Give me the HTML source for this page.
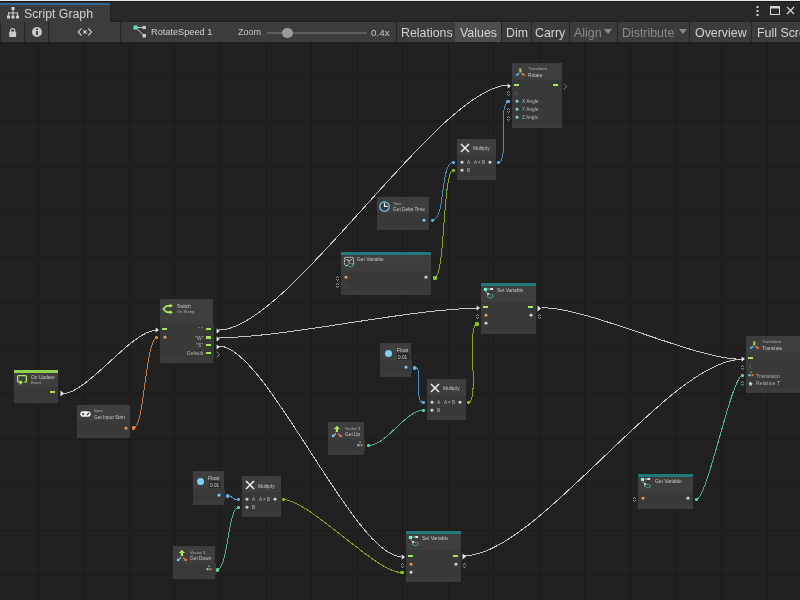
<!DOCTYPE html><html><head><meta charset="utf-8"><style>
html,body{margin:0;padding:0;width:800px;height:600px;overflow:hidden;background:#212121;font-family:"Liberation Sans", sans-serif;}
#root{position:relative;width:800px;height:600px;overflow:hidden;}
.t{will-change:transform;}
</style></head><body><div id="root">
<svg style="position:absolute;left:0;top:0" width="800" height="600"><rect x="38" y="42" width="1" height="558" fill="#1b1b1b"/><rect x="83" y="42" width="1" height="558" fill="#1b1b1b"/><rect x="129" y="42" width="1" height="558" fill="#1b1b1b"/><rect x="174" y="42" width="1" height="558" fill="#1b1b1b"/><rect x="220" y="42" width="1" height="558" fill="#1b1b1b"/><rect x="266" y="42" width="1" height="558" fill="#1b1b1b"/><rect x="311" y="42" width="1" height="558" fill="#1b1b1b"/><rect x="357" y="42" width="1" height="558" fill="#1b1b1b"/><rect x="402" y="42" width="1" height="558" fill="#1b1b1b"/><rect x="448" y="42" width="1" height="558" fill="#1b1b1b"/><rect x="493" y="42" width="1" height="558" fill="#1b1b1b"/><rect x="539" y="42" width="1" height="558" fill="#1b1b1b"/><rect x="584" y="42" width="1" height="558" fill="#1b1b1b"/><rect x="630" y="42" width="1" height="558" fill="#1b1b1b"/><rect x="675" y="42" width="1" height="558" fill="#1b1b1b"/><rect x="721" y="42" width="1" height="558" fill="#1b1b1b"/><rect x="767" y="42" width="1" height="558" fill="#1b1b1b"/><rect x="0" y="75" width="800" height="1" fill="#1b1b1b"/><rect x="0" y="120" width="800" height="1" fill="#1b1b1b"/><rect x="0" y="166" width="800" height="1" fill="#1b1b1b"/><rect x="0" y="211" width="800" height="1" fill="#1b1b1b"/><rect x="0" y="257" width="800" height="1" fill="#1b1b1b"/><rect x="0" y="302" width="800" height="1" fill="#1b1b1b"/><rect x="0" y="348" width="800" height="1" fill="#1b1b1b"/><rect x="0" y="393" width="800" height="1" fill="#1b1b1b"/><rect x="0" y="439" width="800" height="1" fill="#1b1b1b"/><rect x="0" y="484" width="800" height="1" fill="#1b1b1b"/><rect x="0" y="530" width="800" height="1" fill="#1b1b1b"/><rect x="0" y="575" width="800" height="1" fill="#1b1b1b"/></svg>
<div style="position:absolute;left:0px;top:0px;width:800px;height:22px;background:#282828;"></div>
<div style="position:absolute;left:0px;top:0px;width:800px;height:1px;background:#e6e6e6;"></div>
<div style="position:absolute;left:0px;top:1px;width:800px;height:1px;background:#1a1a1a;"></div>
<div style="position:absolute;left:0px;top:21px;width:800px;height:1px;background:#1f1f1f;"></div>
<div style="position:absolute;left:110px;top:5px;width:1px;height:17px;background:#1f1f1f;"></div>
<div style="position:absolute;left:0px;top:3px;width:110px;height:2px;background:#2f6499;"></div>
<div style="position:absolute;left:0px;top:5px;width:110px;height:17px;background:#3c3c3c;"></div>
<svg style="position:absolute;left:6px;top:6px" width="14" height="14"><g fill="#d0d0d0"><rect x="5.5" y="1" width="3" height="3"/><rect x="6.5" y="4" width="1" height="3"/><rect x="2" y="6.5" width="10" height="1"/><rect x="2" y="6.5" width="1" height="3"/><rect x="11" y="6.5" width="1" height="3"/><rect x="6.5" y="6.5" width="1" height="3"/><rect x="1" y="9.5" width="3" height="3"/><rect x="5.5" y="9.5" width="3" height="3"/><rect x="10" y="9.5" width="3" height="3"/></g></svg>
<div class="t" style="position:absolute;left:23.5px;top:7.9px;font-size:12.3px;line-height:1;color:#d2d2d2;white-space:nowrap;">Script Graph</div>
<svg style="position:absolute;left:750px;top:4px" width="50" height="14"><g fill="#d8d8d8"><rect x="6.5" y="2" width="2" height="2"/><rect x="6.5" y="6" width="2" height="2"/><rect x="6.5" y="10" width="2" height="2"/></g><rect x="20.5" y="2.5" width="9" height="8" stroke="#d8d8d8" stroke-width="1" fill="none"/><rect x="20.5" y="2.5" width="9" height="2" fill="#d8d8d8"/><path d="M37 3 L44 10 M44 3 L37 10" stroke="#d8d8d8" stroke-width="1.2"/></svg>
<div style="position:absolute;left:0px;top:22px;width:800px;height:20px;background:#3c3c3c;"></div>
<div style="position:absolute;left:0px;top:22px;width:1px;height:20px;background:#262626;"></div>
<div style="position:absolute;left:24px;top:22px;width:1px;height:20px;background:#262626;"></div>
<div style="position:absolute;left:48px;top:22px;width:1px;height:20px;background:#262626;"></div>
<div style="position:absolute;left:120px;top:22px;width:1px;height:20px;background:#262626;"></div>
<div style="position:absolute;left:396px;top:22px;width:1px;height:20px;background:#262626;"></div>
<div style="position:absolute;left:455px;top:22px;width:1px;height:20px;background:#262626;"></div>
<div style="position:absolute;left:501px;top:22px;width:1px;height:20px;background:#262626;"></div>
<div style="position:absolute;left:531px;top:22px;width:1px;height:20px;background:#262626;"></div>
<div style="position:absolute;left:569px;top:22px;width:1px;height:20px;background:#262626;"></div>
<div style="position:absolute;left:617px;top:22px;width:1px;height:20px;background:#262626;"></div>
<div style="position:absolute;left:689px;top:22px;width:1px;height:20px;background:#262626;"></div>
<div style="position:absolute;left:751px;top:22px;width:1px;height:20px;background:#262626;"></div>
<div style="position:absolute;left:455px;top:22px;width:46px;height:20px;background:#4e4e4e;"></div>
<div style="position:absolute;left:456px;top:22px;width:45px;height:20px;background:#4d4d4d;"></div>
<svg style="position:absolute;left:8px;top:27px" width="10" height="11"><path d="M2.6 4.8 V3.6 A2 2 0 0 1 6.6 3.6 V4.8" stroke="#c8c8c8" stroke-width="1.3" fill="none"/><rect x="1.2" y="4.6" width="6.9" height="5.4" rx="0.6" fill="#c8c8c8"/></svg>
<svg style="position:absolute;left:31px;top:26px" width="12" height="12"><circle cx="6" cy="6" r="5" fill="#c8c8c8"/><rect x="5.1" y="5" width="1.8" height="4" fill="#3c3c3c"/><rect x="5.1" y="2.4" width="1.8" height="1.6" fill="#3c3c3c"/></svg>
<svg style="position:absolute;left:77px;top:27px" width="16" height="10"><path d="M4.6 1.4 L1.2 5 L4.6 8.6 M11.2 1.4 L14.6 5 L11.2 8.6 M6.4 3.4 L9.6 6.6 M9.6 3.4 L6.4 6.6" stroke="#d4d4d4" stroke-width="1.1" fill="none"/></svg>
<svg style="position:absolute;left:133px;top:25px" width="14" height="13"><path d="M2.5 2.5 L11 2.5 M2.5 2.5 L11 10.5" stroke="#c8c8c8" stroke-width="1"/><rect x="0.5" y="0.5" width="4" height="4" fill="#5fe3c8"/><rect x="9.5" y="1" width="3.5" height="3" fill="#c8c8c8"/><rect x="9.5" y="9" width="3.5" height="3.5" fill="#c8c8c8"/></svg>
<div class="t" style="position:absolute;left:151px;top:28.099999999999998px;font-size:9.2px;line-height:1;color:#d2d2d2;white-space:nowrap;">RotateSpeed 1</div>
<div class="t" style="position:absolute;left:238px;top:28.099999999999998px;font-size:9.0px;line-height:1;color:#c8c8c8;white-space:nowrap;">Zoom</div>
<div style="position:absolute;left:267px;top:32px;width:100px;height:2px;background:#5e5e5e;"></div>
<div style="position:absolute;left:282px;top:27.5px;width:10.5px;height:10.5px;border-radius:50%;background:#9a9a9a"></div>
<div class="t" style="position:absolute;left:370.5px;top:28.099999999999998px;font-size:9.9px;line-height:1;color:#c8c8c8;white-space:nowrap;">0.4x</div>
<div class="t" style="position:absolute;left:400.5px;top:26.5px;font-size:12.4px;line-height:1;color:#d2d2d2;white-space:nowrap;">Relations</div>
<div class="t" style="position:absolute;left:459.5px;top:26.5px;font-size:12.4px;line-height:1;color:#d2d2d2;white-space:nowrap;">Values</div>
<div class="t" style="position:absolute;left:505.5px;top:26.5px;font-size:12.4px;line-height:1;color:#d2d2d2;white-space:nowrap;">Dim</div>
<div class="t" style="position:absolute;left:535px;top:26.5px;font-size:12.4px;line-height:1;color:#d2d2d2;white-space:nowrap;">Carry</div>
<div class="t" style="position:absolute;left:574px;top:26.5px;font-size:12.4px;line-height:1;color:#8a8a8a;white-space:nowrap;">Align</div>
<div class="t" style="position:absolute;left:621.5px;top:26.5px;font-size:12.4px;line-height:1;color:#8a8a8a;white-space:nowrap;">Distribute</div>
<div class="t" style="position:absolute;left:695px;top:26.5px;font-size:12.4px;line-height:1;color:#d2d2d2;white-space:nowrap;">Overview</div>
<div class="t" style="position:absolute;left:756.5px;top:26.5px;font-size:12.4px;line-height:1;color:#d2d2d2;white-space:nowrap;">Full Screen</div>
<svg style="position:absolute;left:604px;top:29px" width="9" height="6"><path d="M0 0 L8 0 L4 5Z" fill="#8a8a8a"/></svg>
<svg style="position:absolute;left:679px;top:29px" width="9" height="6"><path d="M0 0 L8 0 L4 5Z" fill="#8a8a8a"/></svg>
<svg style="position:absolute;left:0;top:0" width="800" height="600"><path d="M219 330 C289 330 439 85 509 85" stroke="#c4c4c4" stroke-width="1.0" fill="none" shape-rendering="crispEdges"/><path d="M63 393.6 C87.5 393.6 131.5 330.4 156 330.4" stroke="#c4c4c4" stroke-width="1.0" fill="none" shape-rendering="crispEdges"/><path d="M133.4 428.4 C144.4 428.4 145.6 338.4 156.6 338.4" stroke="#c47c40" stroke-width="1.0" fill="none" shape-rendering="crispEdges"/><path d="M218.75 337.7 C286.25 337.7 410.0 308.4 477.5 308.4" stroke="#c4c4c4" stroke-width="1.0" fill="none" shape-rendering="crispEdges"/><path d="M219 346 C266 346 354 556.5 401 556.5" stroke="#c4c4c4" stroke-width="1.0" fill="none" shape-rendering="crispEdges"/><path d="M542.4 307.8 C590.9 307.8 693.5 359.3 742 359.3" stroke="#c4c4c4" stroke-width="1.0" fill="none" shape-rendering="crispEdges"/><path d="M464.3 555.7 C537.8 555.7 668.5 359.3 742 359.3" stroke="#c4c4c4" stroke-width="1.0" fill="none" shape-rendering="crispEdges"/><path d="M432.6 220 C445.6 220 440.2 162.2 453.2 162.2" stroke="#5189b9" stroke-width="1.0" fill="none" shape-rendering="crispEdges"/><path d="M434.75 277.4 C445.25 277.4 442.7 170.2 453.2 170.2" stroke="#7fa61b" stroke-width="1.0" fill="none" shape-rendering="crispEdges"/><path d="M498.4 162.5 C509.4 162.5 497.4 102.25 508.4 102.25" stroke="#5189b9" stroke-width="1.0" fill="none" shape-rendering="crispEdges"/><path d="M414.45 367.2 C424.45 367.2 413.3 402.45 423.3 402.45" stroke="#5189b9" stroke-width="1.0" fill="none" shape-rendering="crispEdges"/><path d="M368.55 445.5 C386.05 445.5 405.8 410.25 423.3 410.25" stroke="#4fb48d" stroke-width="1.0" fill="none" shape-rendering="crispEdges"/><path d="M468.3 402.45 C479.8 402.45 465.8 323.8 477.3 323.8" stroke="#7fa61b" stroke-width="1.0" fill="none" shape-rendering="crispEdges"/><path d="M226.3 495.6 C235.3 495.6 229.5 499.6 238.5 499.6" stroke="#5189b9" stroke-width="1.0" fill="none" shape-rendering="crispEdges"/><path d="M217.4 569.4 C227.9 569.4 228.0 507.5 238.5 507.5" stroke="#4fb48d" stroke-width="1.0" fill="none" shape-rendering="crispEdges"/><path d="M283.5 499.5 C308.5 499.5 376 572.5 401 572.5" stroke="#7fa61b" stroke-width="1.0" fill="none" shape-rendering="crispEdges"/><path d="M696.5 499.2 C707.5 499.2 731.5 375.5 742.5 375.5" stroke="#4fb48d" stroke-width="1.0" fill="none" shape-rendering="crispEdges"/></svg>
<div style="position:absolute;left:512px;top:63px;width:50px;height:17px;background:#3e3e3e;"></div>
<div style="position:absolute;left:512px;top:80px;width:50px;height:44px;background:#393939;"></div>
<div style="position:absolute;left:512px;top:124px;width:50px;height:4px;background:#3c3c3c;"></div>
<svg style="position:absolute;left:514.5px;top:67.5px" width="11" height="10" viewBox="0 0 11 10"><rect x="4.3" y="0.3" width="2" height="4.2" fill="#9bd64a"/><path d="M4.2 5.6 L1 7.6" stroke="#5cb3e6" stroke-width="1.8"/><path d="M6.6 5.6 L9.8 7.6" stroke="#e87a3a" stroke-width="1.8"/></svg>
<div class="t" style="position:absolute;left:528px;top:66.8px;font-size:4.2px;line-height:1;color:#b0b0b0;white-space:nowrap;">Transform</div>
<div class="t" style="position:absolute;left:528px;top:74.2px;font-size:4.9px;line-height:1;color:#c8c8c8;white-space:nowrap;">Rotate</div>
<div style="position:absolute;left:514.0px;top:83.75px;width:5px;height:2.5px;background:#a4e55a;"></div>
<div style="position:absolute;left:553.0px;top:83.75px;width:5px;height:2.5px;background:#a4e55a;"></div>
<svg style="position:absolute;left:513px;top:90px" width="6" height="6" viewBox="0 0 6 6"><path d="M3 0.5 V3 L0.8 5.2 M3 3 L5.2 5.2" stroke="#4f5f45" stroke-width="0.9" fill="none"/></svg>
<svg style="position:absolute;left:514.5px;top:99.0px" width="4" height="4"><path d="M2 0.5 L3.6 1.7 L3.2 3.5 L0.8 3.5 L0.4 1.7Z" fill="#7fcff5"/></svg>
<div class="t" style="position:absolute;left:522px;top:99.89999999999999px;font-size:4.8px;line-height:1;color:#b8b8b8;white-space:nowrap;">X Angle</div>
<svg style="position:absolute;left:514.5px;top:107.0px" width="4" height="4"><path d="M2 0.5 L3.6 1.7 L3.2 3.5 L0.8 3.5 L0.4 1.7Z" fill="#7fcff5"/></svg>
<div class="t" style="position:absolute;left:522px;top:107.89999999999999px;font-size:4.8px;line-height:1;color:#b8b8b8;white-space:nowrap;">Y Angle</div>
<svg style="position:absolute;left:514.5px;top:115.0px" width="4" height="4"><path d="M2 0.5 L3.6 1.7 L3.2 3.5 L0.8 3.5 L0.4 1.7Z" fill="#7fcff5"/></svg>
<div class="t" style="position:absolute;left:522px;top:115.89999999999999px;font-size:4.8px;line-height:1;color:#b8b8b8;white-space:nowrap;">Z Angle</div>
<svg style="position:absolute;left:506.5px;top:82.5px" width="5" height="6"><path d="M0.7 0.6 L4 3 L0.7 5.4Z" fill="#e8e8e8"/></svg>
<svg style="position:absolute;left:562.5px;top:82.5px" width="5" height="7"><path d="M0.7 0.7 L3.7 3.5 L0.7 6.3" stroke="#aaa" stroke-width="0.7" fill="none"/></svg>
<svg style="position:absolute;left:505.5px;top:91px" width="5" height="6"><g fill="#8c8c8c"><rect x="2" y="0" width="1" height="1"/><rect x="1" y="1" width="1" height="1"/><rect x="3" y="1" width="1" height="1"/><rect x="1" y="3" width="1" height="1"/><rect x="3" y="3" width="1" height="1"/><rect x="2" y="4" width="1" height="1"/></g></svg>
<div style="position:absolute;left:506.25px;top:99.9px;width:3.5px;height:3.5px;background:#62aee6;border-radius:1.2px"></div>
<svg style="position:absolute;left:505.5px;top:107.5px" width="5" height="6"><g fill="#8c8c8c"><rect x="2" y="0" width="1" height="1"/><rect x="1" y="1" width="1" height="1"/><rect x="3" y="1" width="1" height="1"/><rect x="1" y="3" width="1" height="1"/><rect x="3" y="3" width="1" height="1"/><rect x="2" y="4" width="1" height="1"/></g></svg>
<svg style="position:absolute;left:505.5px;top:115.5px" width="5" height="6"><g fill="#8c8c8c"><rect x="2" y="0" width="1" height="1"/><rect x="1" y="1" width="1" height="1"/><rect x="3" y="1" width="1" height="1"/><rect x="1" y="3" width="1" height="1"/><rect x="3" y="3" width="1" height="1"/><rect x="2" y="4" width="1" height="1"/></g></svg>
<div style="position:absolute;left:457px;top:139px;width:39px;height:16px;background:#3e3e3e;"></div>
<div style="position:absolute;left:457px;top:155px;width:39px;height:21px;background:#393939;"></div>
<div style="position:absolute;left:457px;top:176px;width:39px;height:4px;background:#3c3c3c;"></div>
<svg style="position:absolute;left:459.5px;top:142.5px" width="10" height="10" viewBox="0 0 10 10"><path d="M1 1 L9 9 M9 1 L1 9" stroke="#f0f0f0" stroke-width="1.5"/></svg>
<div class="t" style="position:absolute;left:473px;top:147.4px;font-size:4.9px;line-height:1;color:#c8c8c8;white-space:nowrap;">Multiply</div>
<svg style="position:absolute;left:459.5px;top:160.0px" width="4" height="4"><path d="M2 0.5 L3.6 1.7 L3.2 3.5 L0.8 3.5 L0.4 1.7Z" fill="#d9d9d9"/></svg>
<div class="t" style="position:absolute;left:467px;top:160.70000000000002px;font-size:4.8px;line-height:1;color:#b8b8b8;white-space:nowrap;">A</div>
<div class="t" style="position:absolute;left:474px;top:160.70000000000002px;font-size:4.6px;line-height:1;color:#b8b8b8;white-space:nowrap;">A &#215; B</div>
<svg style="position:absolute;left:487.5px;top:160.0px" width="4" height="4"><path d="M2 0.5 L3.6 1.7 L3.2 3.5 L0.8 3.5 L0.4 1.7Z" fill="#d9d9d9"/></svg>
<svg style="position:absolute;left:459.5px;top:167.89999999999998px" width="4" height="4"><path d="M2 0.5 L3.6 1.7 L3.2 3.5 L0.8 3.5 L0.4 1.7Z" fill="#d9d9d9"/></svg>
<div class="t" style="position:absolute;left:467px;top:168.6px;font-size:4.8px;line-height:1;color:#b8b8b8;white-space:nowrap;">B</div>
<div style="position:absolute;left:451.75px;top:160.70000000000002px;width:3.5px;height:3.5px;background:#62aee6;border-radius:1.2px"></div>
<div style="position:absolute;left:451.75px;top:168.6px;width:3.5px;height:3.5px;background:#8cc41e;border-radius:1.2px"></div>
<div style="position:absolute;left:496.75px;top:160.70000000000002px;width:3.5px;height:3.5px;background:#62aee6;border-radius:1.2px"></div>
<div style="position:absolute;left:377px;top:197px;width:52px;height:16px;background:#3e3e3e;"></div>
<div style="position:absolute;left:377px;top:213px;width:52px;height:13px;background:#393939;"></div>
<div style="position:absolute;left:377px;top:226px;width:52px;height:4px;background:#3c3c3c;"></div>
<svg style="position:absolute;left:377px;top:198px" width="16" height="16" viewBox="0 0 16 16"><circle cx="7.5" cy="8.5" r="4.7" stroke="#7ad4fb" stroke-width="1.15" fill="#393939"/><path d="M7.5 5.1 V8.4 H10.7" stroke="#f4f4f4" stroke-width="1.1" fill="none"/></svg>
<div class="t" style="position:absolute;left:393px;top:203.3px;font-size:3.8px;line-height:1;color:#b0b0b0;white-space:nowrap;">Time</div>
<div class="t" style="position:absolute;left:393px;top:208.20000000000002px;font-size:4.8px;line-height:1;color:#c8c8c8;white-space:nowrap;">Get Delta Time</div>
<svg style="position:absolute;left:421.5px;top:217.5px" width="4" height="4"><path d="M2 0.5 L3.6 1.7 L3.2 3.5 L0.8 3.5 L0.4 1.7Z" fill="#7fcff5"/></svg>
<div style="position:absolute;left:430.75px;top:218.9px;width:3.5px;height:3.5px;background:#62aee6;border-radius:1.2px"></div>
<div style="position:absolute;left:341px;top:252px;width:90px;height:19px;background:#3e3e3e;"></div>
<div style="position:absolute;left:341px;top:252px;width:90px;height:3px;background:#21797c;"></div>
<div style="position:absolute;left:341px;top:271px;width:90px;height:20px;background:#393939;"></div>
<div style="position:absolute;left:341px;top:291px;width:90px;height:4px;background:#3c3c3c;"></div>
<svg style="position:absolute;left:340px;top:254px" width="16" height="16" viewBox="0 0 16 16"><path d="M4.4 4.8 Q4.4 3.3 6 3.3 L12 3.3 Q13.6 3.3 13.6 4.8 L13.6 10 Q13.6 11.6 12 11.6 L6 11.6 Q4.4 11.6 4.4 10Z" stroke="#cfcfcf" stroke-width="1" stroke-dasharray="2.2 0.6" fill="none"/><path d="M5.6 5.2 L9 6.8 L12.4 5.2 M9 6.8 L9 9.2" stroke="#c8c8c8" stroke-width="0.9" fill="none"/><path d="M7.4 11 L9.5 9.3 L11.7 9.3 L13.8 11 L11.7 12.7 L9.5 12.7Z" fill="#3e3e3e" stroke="#5ce8d0" stroke-width="0.9" stroke-dasharray="1.1 0.7"/></svg>
<div class="t" style="position:absolute;left:357px;top:258.40000000000003px;font-size:4.9px;line-height:1;color:#c8c8c8;white-space:nowrap;">Get Variable</div>
<svg style="position:absolute;left:343.5px;top:275.3px" width="4" height="4"><path d="M2 0.5 L3.6 1.7 L3.2 3.5 L0.8 3.5 L0.4 1.7Z" fill="#f0a262"/></svg>
<svg style="position:absolute;left:423.5px;top:275.3px" width="4" height="4"><path d="M2 0.5 L3.6 1.7 L3.2 3.5 L0.8 3.5 L0.4 1.7Z" fill="#d9d9d9"/></svg>
<div style="position:absolute;left:433.25px;top:276.0px;width:3.5px;height:3.5px;background:#8cc41e;border-radius:1.2px"></div>
<svg style="position:absolute;left:343.5px;top:282.5px" width="5" height="5" viewBox="0 0 5 5"><path d="M0.8 1 L2.5 2.5 L4.2 1 M2.5 2.5 V4.5" stroke="#555" stroke-width="0.6" fill="none"/></svg>
<svg style="position:absolute;left:335.0px;top:275.6px" width="5" height="6"><g fill="#8c8c8c"><rect x="2" y="0" width="1" height="1"/><rect x="1" y="1" width="1" height="1"/><rect x="3" y="1" width="1" height="1"/><rect x="1" y="3" width="1" height="1"/><rect x="3" y="3" width="1" height="1"/><rect x="2" y="4" width="1" height="1"/></g></svg>
<svg style="position:absolute;left:335.0px;top:283.3px" width="5" height="6"><g fill="#8c8c8c"><rect x="2" y="0" width="1" height="1"/><rect x="1" y="1" width="1" height="1"/><rect x="3" y="1" width="1" height="1"/><rect x="1" y="3" width="1" height="1"/><rect x="3" y="3" width="1" height="1"/><rect x="2" y="4" width="1" height="1"/></g></svg>
<div style="position:absolute;left:481px;top:283px;width:55px;height:19px;background:#3e3e3e;"></div>
<div style="position:absolute;left:481px;top:283px;width:55px;height:3px;background:#21797c;"></div>
<div style="position:absolute;left:481px;top:302px;width:55px;height:28px;background:#393939;"></div>
<div style="position:absolute;left:481px;top:330px;width:55px;height:4px;background:#3c3c3c;"></div>
<svg style="position:absolute;left:482px;top:286px" width="14" height="14" viewBox="0 0 14 14"><rect x="1.9" y="1.9" width="3.1" height="3" fill="#6ef5e4"/><rect x="5.1" y="2.5" width="3.2" height="1.2" fill="#9a9a9a"/><rect x="8.2" y="2" width="2.9" height="2" fill="#e8e8e8"/><rect x="3.6" y="5.4" width="1.2" height="1.2" fill="#bdbdbd"/><rect x="5" y="7" width="2" height="1.8" fill="#e0e0e0"/><path d="M5.3 10 L7.4 8.3 L9.8 8.3 L11.9 10 L9.8 11.7 L7.4 11.7Z" stroke="#5ce8d0" stroke-width="0.9" stroke-dasharray="1.1 0.7" fill="none"/></svg>
<div class="t" style="position:absolute;left:497px;top:289.1px;font-size:4.9px;line-height:1;color:#c8c8c8;white-space:nowrap;">Set Variable</div>
<div style="position:absolute;left:483.0px;top:305.75px;width:5px;height:2.5px;background:#a4e55a;"></div>
<div style="position:absolute;left:528.0px;top:305.75px;width:5px;height:2.5px;background:#a4e55a;"></div>
<svg style="position:absolute;left:483.5px;top:313.4px" width="4" height="4"><path d="M2 0.5 L3.6 1.7 L3.2 3.5 L0.8 3.5 L0.4 1.7Z" fill="#f0a262"/></svg>
<svg style="position:absolute;left:528.5px;top:313.4px" width="4" height="4"><path d="M2 0.5 L3.6 1.7 L3.2 3.5 L0.8 3.5 L0.4 1.7Z" fill="#d9d9d9"/></svg>
<svg style="position:absolute;left:483.5px;top:321.4px" width="4" height="4"><path d="M2 0.5 L3.6 1.7 L3.2 3.5 L0.8 3.5 L0.4 1.7Z" fill="#d9d9d9"/></svg>
<svg style="position:absolute;left:476px;top:305px" width="5" height="6"><path d="M0.7 0.6 L4 3 L0.7 5.4Z" fill="#e8e8e8"/></svg>
<svg style="position:absolute;left:474.5px;top:313.7px" width="5" height="6"><g fill="#8c8c8c"><rect x="2" y="0" width="1" height="1"/><rect x="1" y="1" width="1" height="1"/><rect x="3" y="1" width="1" height="1"/><rect x="1" y="3" width="1" height="1"/><rect x="3" y="3" width="1" height="1"/><rect x="2" y="4" width="1" height="1"/></g></svg>
<svg style="position:absolute;left:536.5px;top:313.7px" width="5" height="6"><g fill="#8c8c8c"><rect x="2" y="0" width="1" height="1"/><rect x="1" y="1" width="1" height="1"/><rect x="3" y="1" width="1" height="1"/><rect x="1" y="3" width="1" height="1"/><rect x="3" y="3" width="1" height="1"/><rect x="2" y="4" width="1" height="1"/></g></svg>
<div style="position:absolute;left:475.25px;top:322.09999999999997px;width:3.5px;height:3.5px;background:#8cc41e;border-radius:1.2px"></div>
<svg style="position:absolute;left:537px;top:304.5px" width="5" height="7" viewBox="0 0 5 7"><path d="M0.5 0.5 L4 3.5 L0.5 6.5Z" fill="#e8e8e8"/></svg>
<div style="position:absolute;left:406px;top:531px;width:55px;height:19px;background:#3e3e3e;"></div>
<div style="position:absolute;left:406px;top:531px;width:55px;height:3px;background:#21797c;"></div>
<div style="position:absolute;left:406px;top:550px;width:55px;height:28px;background:#393939;"></div>
<div style="position:absolute;left:406px;top:578px;width:55px;height:4px;background:#3c3c3c;"></div>
<svg style="position:absolute;left:407px;top:534px" width="14" height="14" viewBox="0 0 14 14"><rect x="1.9" y="1.9" width="3.1" height="3" fill="#6ef5e4"/><rect x="5.1" y="2.5" width="3.2" height="1.2" fill="#9a9a9a"/><rect x="8.2" y="2" width="2.9" height="2" fill="#e8e8e8"/><rect x="3.6" y="5.4" width="1.2" height="1.2" fill="#bdbdbd"/><rect x="5" y="7" width="2" height="1.8" fill="#e0e0e0"/><path d="M5.3 10 L7.4 8.3 L9.8 8.3 L11.9 10 L9.8 11.7 L7.4 11.7Z" stroke="#5ce8d0" stroke-width="0.9" stroke-dasharray="1.1 0.7" fill="none"/></svg>
<div class="t" style="position:absolute;left:422px;top:537.0999999999999px;font-size:4.9px;line-height:1;color:#c8c8c8;white-space:nowrap;">Set Variable</div>
<div style="position:absolute;left:408.0px;top:554.55px;width:5px;height:2.5px;background:#a4e55a;"></div>
<div style="position:absolute;left:453.0px;top:554.55px;width:5px;height:2.5px;background:#a4e55a;"></div>
<svg style="position:absolute;left:408.5px;top:562.2px" width="4" height="4"><path d="M2 0.5 L3.6 1.7 L3.2 3.5 L0.8 3.5 L0.4 1.7Z" fill="#f0a262"/></svg>
<svg style="position:absolute;left:453.5px;top:562.2px" width="4" height="4"><path d="M2 0.5 L3.6 1.7 L3.2 3.5 L0.8 3.5 L0.4 1.7Z" fill="#d9d9d9"/></svg>
<svg style="position:absolute;left:408.5px;top:570.2px" width="4" height="4"><path d="M2 0.5 L3.6 1.7 L3.2 3.5 L0.8 3.5 L0.4 1.7Z" fill="#d9d9d9"/></svg>
<svg style="position:absolute;left:401px;top:553.8px" width="5" height="6"><path d="M0.7 0.6 L4 3 L0.7 5.4Z" fill="#e8e8e8"/></svg>
<svg style="position:absolute;left:399.5px;top:562.5px" width="5" height="6"><g fill="#8c8c8c"><rect x="2" y="0" width="1" height="1"/><rect x="1" y="1" width="1" height="1"/><rect x="3" y="1" width="1" height="1"/><rect x="1" y="3" width="1" height="1"/><rect x="3" y="3" width="1" height="1"/><rect x="2" y="4" width="1" height="1"/></g></svg>
<svg style="position:absolute;left:461.5px;top:562.5px" width="5" height="6"><g fill="#8c8c8c"><rect x="2" y="0" width="1" height="1"/><rect x="1" y="1" width="1" height="1"/><rect x="3" y="1" width="1" height="1"/><rect x="1" y="3" width="1" height="1"/><rect x="3" y="3" width="1" height="1"/><rect x="2" y="4" width="1" height="1"/></g></svg>
<div style="position:absolute;left:400.25px;top:570.9px;width:3.5px;height:3.5px;background:#8cc41e;border-radius:1.2px"></div>
<svg style="position:absolute;left:462px;top:553.3px" width="5" height="7" viewBox="0 0 5 7"><path d="M0.5 0.5 L4 3.5 L0.5 6.5Z" fill="#e8e8e8"/></svg>
<div style="position:absolute;left:160px;top:299px;width:53px;height:25px;background:#3e3e3e;"></div>
<div style="position:absolute;left:160px;top:324px;width:54px;height:34px;background:#393939;"></div>
<div style="position:absolute;left:160px;top:358px;width:53px;height:5px;background:#3c3c3c;"></div>
<svg style="position:absolute;left:162px;top:303px" width="12" height="12" viewBox="0 0 12 12"><path d="M8.5 2.8 L5.2 2.8 Q4.6 2.8 4.1 3.3 L1.3 6 L4.1 8.7 Q4.6 9.2 5.2 9.2 L8.5 9.2" stroke="#a8f05a" stroke-width="1.7" stroke-linejoin="round" fill="none"/><path d="M7.6 0.8 L11 2.8 L7.6 4.8Z M7.6 7.2 L11 9.2 L7.6 11.2Z" fill="#a8f05a"/></svg>
<div class="t" style="position:absolute;left:177px;top:305.3px;font-size:4.7px;line-height:1;color:#c8c8c8;white-space:nowrap;">Switch</div>
<div class="t" style="position:absolute;left:177px;top:310.2px;font-size:4.1px;line-height:1;color:#b0b0b0;white-space:nowrap;">On String</div>
<div style="position:absolute;left:162.0px;top:327.75px;width:5px;height:2.5px;background:#a4e55a;"></div>
<svg style="position:absolute;left:162.5px;top:335.0px" width="4" height="4"><path d="M2 0.5 L3.6 1.7 L3.2 3.5 L0.8 3.5 L0.4 1.7Z" fill="#f0a262"/></svg>
<div style="position:absolute;left:206.0px;top:327.75px;width:5px;height:2.5px;background:#a4e55a;"></div>
<div class="t" style="position:absolute;right:596.4px;top:328.40000000000003px;font-size:4.9px;line-height:1;color:#b8b8b8;white-space:nowrap;letter-spacing:0.15px">&quot; &quot;</div>
<div style="position:absolute;left:206.0px;top:336.05px;width:5px;height:2.5px;background:#a4e55a;"></div>
<div class="t" style="position:absolute;right:596.4px;top:336.70000000000005px;font-size:4.9px;line-height:1;color:#b8b8b8;white-space:nowrap;letter-spacing:0.15px">&quot;W&quot;</div>
<div style="position:absolute;left:206.0px;top:343.75px;width:5px;height:2.5px;background:#a4e55a;"></div>
<div class="t" style="position:absolute;right:596.4px;top:344.40000000000003px;font-size:4.9px;line-height:1;color:#b8b8b8;white-space:nowrap;letter-spacing:0.15px">&quot;S&quot;</div>
<div style="position:absolute;left:206.0px;top:351.75px;width:5px;height:2.5px;background:#a4e55a;"></div>
<div class="t" style="position:absolute;right:596.4px;top:352.40000000000003px;font-size:4.9px;line-height:1;color:#b8b8b8;white-space:nowrap;letter-spacing:0.15px">Default</div>
<svg style="position:absolute;left:215.5px;top:327.5px" width="5" height="6" viewBox="0 0 5 6"><path d="M0.6 0.5 L3.8 3 L0.6 5.5Z" fill="#e8e8e8"/></svg>
<svg style="position:absolute;left:215.5px;top:335.8px" width="5" height="6" viewBox="0 0 5 6"><path d="M0.6 0.5 L3.8 3 L0.6 5.5Z" fill="#e8e8e8"/></svg>
<svg style="position:absolute;left:215.5px;top:343.5px" width="5" height="6" viewBox="0 0 5 6"><path d="M0.6 0.5 L3.8 3 L0.6 5.5Z" fill="#e8e8e8"/></svg>
<svg style="position:absolute;left:215.5px;top:350.8px" width="5" height="7"><path d="M0.7 0.7 L3.7 3.5 L0.7 6.3" stroke="#aaa" stroke-width="0.7" fill="none"/></svg>
<svg style="position:absolute;left:155px;top:326.5px" width="5" height="6"><path d="M0.7 0.6 L4 3 L0.7 5.4Z" fill="#e8e8e8"/></svg>
<div style="position:absolute;left:154.75px;top:335.7px;width:3.5px;height:3.5px;background:#e08b45;border-radius:1.2px"></div>
<div style="position:absolute;left:14px;top:370px;width:44px;height:17px;background:#3e3e3e;"></div>
<div style="position:absolute;left:14px;top:370px;width:44px;height:3px;background:#8fd04e;"></div>
<div style="position:absolute;left:14px;top:387px;width:44px;height:12px;background:#393939;"></div>
<div style="position:absolute;left:14px;top:399px;width:44px;height:4px;background:#3c3c3c;"></div>
<svg style="position:absolute;left:16px;top:374px" width="12" height="12" viewBox="0 0 12 12"><path d="M4.6 8.2 H2.6 Q1.6 8.2 1.6 7.2 V2.4 Q1.6 1.5 2.6 1.5 H9.4 Q10.4 1.5 10.4 2.4 V7.2 Q10.4 8.2 9.4 8.2 H8.3" stroke="#a8ec5a" stroke-width="1.25" fill="none"/><path d="M3.6 5.9 L7.1 8.35 L3.6 10.9 Z" fill="#a8ec5a"/></svg>
<div class="t" style="position:absolute;left:31px;top:376.2px;font-size:4.9px;line-height:1;color:#c8c8c8;white-space:nowrap;">On Update</div>
<div class="t" style="position:absolute;left:31px;top:382.40000000000003px;font-size:3.8px;line-height:1;color:#b0b0b0;white-space:nowrap;">Event</div>
<div style="position:absolute;left:50.0px;top:390.95px;width:5px;height:2.5px;background:#a4e55a;"></div>
<svg style="position:absolute;left:59.5px;top:390px" width="5" height="7" viewBox="0 0 5 7"><path d="M0.5 0.5 L4 3.5 L0.5 6.5Z" fill="#e8e8e8"/></svg>
<div style="position:absolute;left:77px;top:405px;width:53px;height:16px;background:#3e3e3e;"></div>
<div style="position:absolute;left:77px;top:421px;width:53px;height:13px;background:#393939;"></div>
<div style="position:absolute;left:77px;top:434px;width:53px;height:4px;background:#3c3c3c;"></div>
<svg style="position:absolute;left:80px;top:410.5px" width="11" height="6" viewBox="0 0 11 6"><rect x="0.3" y="0.3" width="10.4" height="5.4" rx="2.5" fill="#f2f2f2"/><path d="M2 3 H4.4 M3.2 1.8 V4.2" stroke="#333" stroke-width="0.9"/><circle cx="7.3" cy="3.6" r="0.8" fill="#333"/><circle cx="8.5" cy="2.4" r="0.8" fill="#333"/></svg>
<div class="t" style="position:absolute;left:94px;top:409.8px;font-size:3.8px;line-height:1;color:#b0b0b0;white-space:nowrap;">Input</div>
<div class="t" style="position:absolute;left:94px;top:416.2px;font-size:4.8px;line-height:1;color:#c8c8c8;white-space:nowrap;">Get Input Strin</div>
<svg style="position:absolute;left:123.5px;top:425.5px" width="4" height="4"><path d="M2 0.5 L3.6 1.7 L3.2 3.5 L0.8 3.5 L0.4 1.7Z" fill="#f0a262"/></svg>
<div style="position:absolute;left:131.75px;top:426.4px;width:3.5px;height:3.5px;background:#e08b45;border-radius:1.2px"></div>
<div style="position:absolute;left:380px;top:343px;width:31px;height:18px;background:#3e3e3e;"></div>
<div style="position:absolute;left:380px;top:361px;width:32px;height:12px;background:#393939;"></div>
<div style="position:absolute;left:380px;top:373px;width:31px;height:4px;background:#3c3c3c;"></div>
<div style="position:absolute;left:384.8px;top:350.0px;width:7.2px;height:7.2px;border-radius:50%;background:#7dd0fa"></div>
<div class="t" style="position:absolute;left:397.0px;top:347.8px;font-size:5.0px;line-height:1;color:#c8c8c8;white-space:nowrap;">Float</div>
<div style="position:absolute;left:397.40000000000003px;top:352.8px;width:12.2px;height:7px;background:#2a2a2a;"></div>
<div class="t" style="position:absolute;left:398.2px;top:355.5px;font-size:4.7px;line-height:1;color:#d8d8d8;white-space:nowrap;">0.01</div>
<svg style="position:absolute;left:403.5px;top:364.9px" width="4" height="4"><path d="M2 0.5 L3.6 1.7 L3.2 3.5 L0.8 3.5 L0.4 1.7Z" fill="#7fcff5"/></svg>
<div style="position:absolute;left:412.75px;top:366.2px;width:3.5px;height:3.5px;background:#62aee6;border-radius:1.2px"></div>
<div style="position:absolute;left:193px;top:471px;width:31px;height:18px;background:#3e3e3e;"></div>
<div style="position:absolute;left:193px;top:489px;width:32px;height:12px;background:#393939;"></div>
<div style="position:absolute;left:193px;top:501px;width:31px;height:4px;background:#3c3c3c;"></div>
<div style="position:absolute;left:197.0px;top:478.0px;width:7.2px;height:7.2px;border-radius:50%;background:#7dd0fa"></div>
<div class="t" style="position:absolute;left:208.39999999999998px;top:475.8px;font-size:5.0px;line-height:1;color:#c8c8c8;white-space:nowrap;">Float</div>
<div style="position:absolute;left:208.79999999999998px;top:480.8px;width:12.2px;height:7px;background:#2a2a2a;"></div>
<div class="t" style="position:absolute;left:209.6px;top:483.5px;font-size:4.7px;line-height:1;color:#d8d8d8;white-space:nowrap;">0.01</div>
<svg style="position:absolute;left:216.5px;top:492.7px" width="4" height="4"><path d="M2 0.5 L3.6 1.7 L3.2 3.5 L0.8 3.5 L0.4 1.7Z" fill="#7fcff5"/></svg>
<div style="position:absolute;left:225.75px;top:494.0px;width:3.5px;height:3.5px;background:#62aee6;border-radius:1.2px"></div>
<div style="position:absolute;left:427px;top:379px;width:39px;height:16px;background:#3e3e3e;"></div>
<div style="position:absolute;left:427px;top:395px;width:39px;height:21px;background:#393939;"></div>
<div style="position:absolute;left:427px;top:416px;width:39px;height:4px;background:#3c3c3c;"></div>
<svg style="position:absolute;left:429.5px;top:382.5px" width="10" height="10" viewBox="0 0 10 10"><path d="M1 1 L9 9 M9 1 L1 9" stroke="#f0f0f0" stroke-width="1.5"/></svg>
<div class="t" style="position:absolute;left:443px;top:387.40000000000003px;font-size:4.9px;line-height:1;color:#c8c8c8;white-space:nowrap;">Multiply</div>
<svg style="position:absolute;left:429.5px;top:400.0px" width="4" height="4"><path d="M2 0.5 L3.6 1.7 L3.2 3.5 L0.8 3.5 L0.4 1.7Z" fill="#d9d9d9"/></svg>
<div class="t" style="position:absolute;left:437px;top:400.70000000000005px;font-size:4.8px;line-height:1;color:#b8b8b8;white-space:nowrap;">A</div>
<div class="t" style="position:absolute;left:444px;top:400.70000000000005px;font-size:4.6px;line-height:1;color:#b8b8b8;white-space:nowrap;">A &#215; B</div>
<svg style="position:absolute;left:457.5px;top:400.0px" width="4" height="4"><path d="M2 0.5 L3.6 1.7 L3.2 3.5 L0.8 3.5 L0.4 1.7Z" fill="#d9d9d9"/></svg>
<svg style="position:absolute;left:429.5px;top:407.9px" width="4" height="4"><path d="M2 0.5 L3.6 1.7 L3.2 3.5 L0.8 3.5 L0.4 1.7Z" fill="#d9d9d9"/></svg>
<div class="t" style="position:absolute;left:437px;top:408.6px;font-size:4.8px;line-height:1;color:#b8b8b8;white-space:nowrap;">B</div>
<div style="position:absolute;left:421.75px;top:400.7px;width:3.5px;height:3.5px;background:#62aee6;border-radius:1.2px"></div>
<div style="position:absolute;left:421.75px;top:408.59999999999997px;width:3.5px;height:3.5px;background:#5cd4a6;border-radius:1.2px"></div>
<div style="position:absolute;left:466.75px;top:400.7px;width:3.5px;height:3.5px;background:#8cc41e;border-radius:1.2px"></div>
<div style="position:absolute;left:242px;top:476px;width:39px;height:16px;background:#3e3e3e;"></div>
<div style="position:absolute;left:242px;top:492px;width:39px;height:21px;background:#393939;"></div>
<div style="position:absolute;left:242px;top:513px;width:39px;height:4px;background:#3c3c3c;"></div>
<svg style="position:absolute;left:244.5px;top:479.5px" width="10" height="10" viewBox="0 0 10 10"><path d="M1 1 L9 9 M9 1 L1 9" stroke="#f0f0f0" stroke-width="1.5"/></svg>
<div class="t" style="position:absolute;left:258px;top:485.3px;font-size:4.9px;line-height:1;color:#c8c8c8;white-space:nowrap;">Multiply</div>
<svg style="position:absolute;left:244.5px;top:497.0px" width="4" height="4"><path d="M2 0.5 L3.6 1.7 L3.2 3.5 L0.8 3.5 L0.4 1.7Z" fill="#d9d9d9"/></svg>
<div class="t" style="position:absolute;left:252px;top:497.70000000000005px;font-size:4.8px;line-height:1;color:#b8b8b8;white-space:nowrap;">A</div>
<div class="t" style="position:absolute;left:259px;top:497.70000000000005px;font-size:4.6px;line-height:1;color:#b8b8b8;white-space:nowrap;">A &#215; B</div>
<svg style="position:absolute;left:272.5px;top:497.0px" width="4" height="4"><path d="M2 0.5 L3.6 1.7 L3.2 3.5 L0.8 3.5 L0.4 1.7Z" fill="#d9d9d9"/></svg>
<svg style="position:absolute;left:244.5px;top:504.9px" width="4" height="4"><path d="M2 0.5 L3.6 1.7 L3.2 3.5 L0.8 3.5 L0.4 1.7Z" fill="#d9d9d9"/></svg>
<div class="t" style="position:absolute;left:252px;top:505.6px;font-size:4.8px;line-height:1;color:#b8b8b8;white-space:nowrap;">B</div>
<div style="position:absolute;left:236.75px;top:497.7px;width:3.5px;height:3.5px;background:#62aee6;border-radius:1.2px"></div>
<div style="position:absolute;left:236.75px;top:505.59999999999997px;width:3.5px;height:3.5px;background:#5cd4a6;border-radius:1.2px"></div>
<div style="position:absolute;left:281.75px;top:497.7px;width:3.5px;height:3.5px;background:#8cc41e;border-radius:1.2px"></div>
<div style="position:absolute;left:328px;top:422px;width:36px;height:17px;background:#3e3e3e;"></div>
<div style="position:absolute;left:328px;top:439px;width:37px;height:12px;background:#393939;"></div>
<div style="position:absolute;left:328px;top:451px;width:36px;height:4px;background:#3c3c3c;"></div>
<svg style="position:absolute;left:331px;top:425px" width="13" height="13" viewBox="0 0 13 13"><path d="M5.9 0.8 L9 4 L7 4 L7 7 L4.8 7 L4.8 4 L2.8 4Z" fill="#a8ec5a"/><path d="M4.8 8.4 L2 11.2" stroke="#7fd4fb" stroke-width="1.3"/><path d="M1 9.3 L1 12 L3.7 12Z" fill="#7fd4fb"/><path d="M7 8.4 L9.8 11.2" stroke="#f47a3c" stroke-width="1.3"/><path d="M10.8 9.3 L10.8 12 L8.1 12Z" fill="#f47a3c"/></svg>
<div class="t" style="position:absolute;left:345px;top:427.3px;font-size:4.2px;line-height:1;color:#b0b0b0;white-space:nowrap;">Vector 3</div>
<div class="t" style="position:absolute;left:345px;top:432.6px;font-size:4.8px;line-height:1;color:#c8c8c8;white-space:nowrap;">Get Up</div>
<svg style="position:absolute;left:357px;top:441px" width="6" height="6" viewBox="0 0 6 6"><path d="M2.3 0.5 L3.7 0.5 L4 1.8 L2 1.8Z" fill="#7fb84a"/><rect x="0.5" y="3.2" width="2" height="2" fill="#7fd4fb"/><rect x="3.5" y="3.2" width="2" height="2" fill="#f07a3c"/></svg>
<div style="position:absolute;left:366.75px;top:443.9px;width:3.5px;height:3.5px;background:#5cd4a6;border-radius:1.2px"></div>
<div style="position:absolute;left:173px;top:546px;width:42px;height:17px;background:#3e3e3e;"></div>
<div style="position:absolute;left:173px;top:563px;width:43px;height:12px;background:#393939;"></div>
<div style="position:absolute;left:173px;top:575px;width:42px;height:4px;background:#3c3c3c;"></div>
<svg style="position:absolute;left:176px;top:549px" width="13" height="13" viewBox="0 0 13 13"><path d="M5.9 0.8 L9 4 L7 4 L7 7 L4.8 7 L4.8 4 L2.8 4Z" fill="#a8ec5a"/><path d="M4.8 8.4 L2 11.2" stroke="#7fd4fb" stroke-width="1.3"/><path d="M1 9.3 L1 12 L3.7 12Z" fill="#7fd4fb"/><path d="M7 8.4 L9.8 11.2" stroke="#f47a3c" stroke-width="1.3"/><path d="M10.8 9.3 L10.8 12 L8.1 12Z" fill="#f47a3c"/></svg>
<div class="t" style="position:absolute;left:190px;top:551.3px;font-size:4.2px;line-height:1;color:#b0b0b0;white-space:nowrap;">Vector 3</div>
<div class="t" style="position:absolute;left:190px;top:556.5999999999999px;font-size:4.8px;line-height:1;color:#c8c8c8;white-space:nowrap;">Get Down</div>
<svg style="position:absolute;left:206px;top:565.2px" width="6" height="6" viewBox="0 0 6 6"><path d="M2.3 0.5 L3.7 0.5 L4 1.8 L2 1.8Z" fill="#7fb84a"/><rect x="0.5" y="3.2" width="2" height="2" fill="#7fd4fb"/><rect x="3.5" y="3.2" width="2" height="2" fill="#f07a3c"/></svg>
<div style="position:absolute;left:215.75px;top:568.1px;width:3.5px;height:3.5px;background:#5cd4a6;border-radius:1.2px"></div>
<div style="position:absolute;left:638px;top:474px;width:55px;height:18.5px;background:#3e3e3e;"></div>
<div style="position:absolute;left:638px;top:474px;width:55px;height:3px;background:#21797c;"></div>
<div style="position:absolute;left:638px;top:492.5px;width:55px;height:12.5px;background:#393939;"></div>
<div style="position:absolute;left:638px;top:505px;width:55px;height:4px;background:#3c3c3c;"></div>
<svg style="position:absolute;left:639px;top:476px" width="14" height="14" viewBox="0 0 14 14"><rect x="1.9" y="1.9" width="3.1" height="3" fill="#6ef5e4"/><rect x="5.1" y="2.5" width="3.2" height="1.2" fill="#9a9a9a"/><rect x="8.2" y="2" width="2.9" height="2" fill="#e8e8e8"/><rect x="3.6" y="5.4" width="1.2" height="1.2" fill="#bdbdbd"/><rect x="5" y="7" width="2" height="1.8" fill="#e0e0e0"/><path d="M5.3 10 L7.4 8.3 L9.8 8.3 L11.9 10 L9.8 11.7 L7.4 11.7Z" stroke="#5ce8d0" stroke-width="0.9" stroke-dasharray="1.1 0.7" fill="none"/></svg>
<div class="t" style="position:absolute;left:655px;top:479.7px;font-size:4.9px;line-height:1;color:#c8c8c8;white-space:nowrap;">Get Variable</div>
<svg style="position:absolute;left:640.5px;top:496.4px" width="4" height="4"><path d="M2 0.5 L3.6 1.7 L3.2 3.5 L0.8 3.5 L0.4 1.7Z" fill="#f0a262"/></svg>
<svg style="position:absolute;left:685.5px;top:496.4px" width="4" height="4"><path d="M2 0.5 L3.6 1.7 L3.2 3.5 L0.8 3.5 L0.4 1.7Z" fill="#d9d9d9"/></svg>
<div style="position:absolute;left:694.75px;top:497.79999999999995px;width:3.5px;height:3.5px;background:#5cd4a6;border-radius:1.2px"></div>
<svg style="position:absolute;left:632.0px;top:496.7px" width="5" height="6"><g fill="#8c8c8c"><rect x="2" y="0" width="1" height="1"/><rect x="1" y="1" width="1" height="1"/><rect x="3" y="1" width="1" height="1"/><rect x="1" y="3" width="1" height="1"/><rect x="3" y="3" width="1" height="1"/><rect x="2" y="4" width="1" height="1"/></g></svg>
<div style="position:absolute;left:746px;top:336px;width:60px;height:17px;background:#3e3e3e;"></div>
<div style="position:absolute;left:746px;top:353px;width:60px;height:36px;background:#393939;"></div>
<div style="position:absolute;left:746px;top:389px;width:60px;height:4px;background:#3c3c3c;"></div>
<svg style="position:absolute;left:748.5px;top:340.5px" width="11" height="10" viewBox="0 0 11 10"><rect x="4.3" y="0.3" width="2" height="4.2" fill="#9bd64a"/><path d="M4.2 5.6 L1 7.6" stroke="#5cb3e6" stroke-width="1.8"/><path d="M6.6 5.6 L9.8 7.6" stroke="#e87a3a" stroke-width="1.8"/></svg>
<div class="t" style="position:absolute;left:762px;top:340.1px;font-size:4.2px;line-height:1;color:#b0b0b0;white-space:nowrap;">Transform</div>
<div class="t" style="position:absolute;left:762px;top:347.40000000000003px;font-size:4.9px;line-height:1;color:#c8c8c8;white-space:nowrap;">Translate</div>
<div style="position:absolute;left:748.0px;top:356.75px;width:5px;height:2.5px;background:#a4e55a;"></div>
<svg style="position:absolute;left:747px;top:363.7px" width="6" height="6" viewBox="0 0 6 6"><path d="M3 0.5 V3 L0.8 5.2 M3 3 L5.2 5.2" stroke="#4f5f45" stroke-width="0.9" fill="none"/></svg>
<svg style="position:absolute;left:748px;top:371px" width="6" height="6" viewBox="0 0 6 6"><path d="M2.3 0.5 L3.7 0.5 L4 1.8 L2 1.8Z" fill="#7fb84a"/><rect x="0.5" y="3.2" width="2" height="2" fill="#7fd4fb"/><rect x="3.5" y="3.2" width="2" height="2" fill="#f07a3c"/></svg>
<div class="t" style="position:absolute;left:756px;top:374.6px;font-size:4.8px;line-height:1;color:#b8b8b8;white-space:nowrap;letter-spacing:0.3px">Translatio</div>
<svg style="position:absolute;left:747.5px;top:380.5px" width="5" height="5" viewBox="0 0 5 5"><path d="M2.5 0.2 L3.2 1.8 L4.8 2 L3.6 3.1 L4 4.8 L2.5 3.9 L1 4.8 L1.4 3.1 L0.2 2 L1.8 1.8Z" fill="#cfe6f8"/></svg>
<div class="t" style="position:absolute;left:756px;top:382.40000000000003px;font-size:4.8px;line-height:1;color:#b8b8b8;white-space:nowrap;letter-spacing:0.3px">Relative T</div>
<svg style="position:absolute;left:740.5px;top:355.8px" width="5" height="6"><path d="M0.7 0.6 L4 3 L0.7 5.4Z" fill="#e8e8e8"/></svg>
<svg style="position:absolute;left:739.5px;top:364.7px" width="5" height="6"><g fill="#8c8c8c"><rect x="2" y="0" width="1" height="1"/><rect x="1" y="1" width="1" height="1"/><rect x="3" y="1" width="1" height="1"/><rect x="1" y="3" width="1" height="1"/><rect x="3" y="3" width="1" height="1"/><rect x="2" y="4" width="1" height="1"/></g></svg>
<div style="position:absolute;left:740.75px;top:373.59999999999997px;width:3.5px;height:3.5px;background:#5cd4a6;border-radius:1.2px"></div>
<svg style="position:absolute;left:739.5px;top:381px" width="5" height="6"><g fill="#8c8c8c"><rect x="2" y="0" width="1" height="1"/><rect x="1" y="1" width="1" height="1"/><rect x="3" y="1" width="1" height="1"/><rect x="1" y="3" width="1" height="1"/><rect x="3" y="3" width="1" height="1"/><rect x="2" y="4" width="1" height="1"/></g></svg>
</div></body></html>
